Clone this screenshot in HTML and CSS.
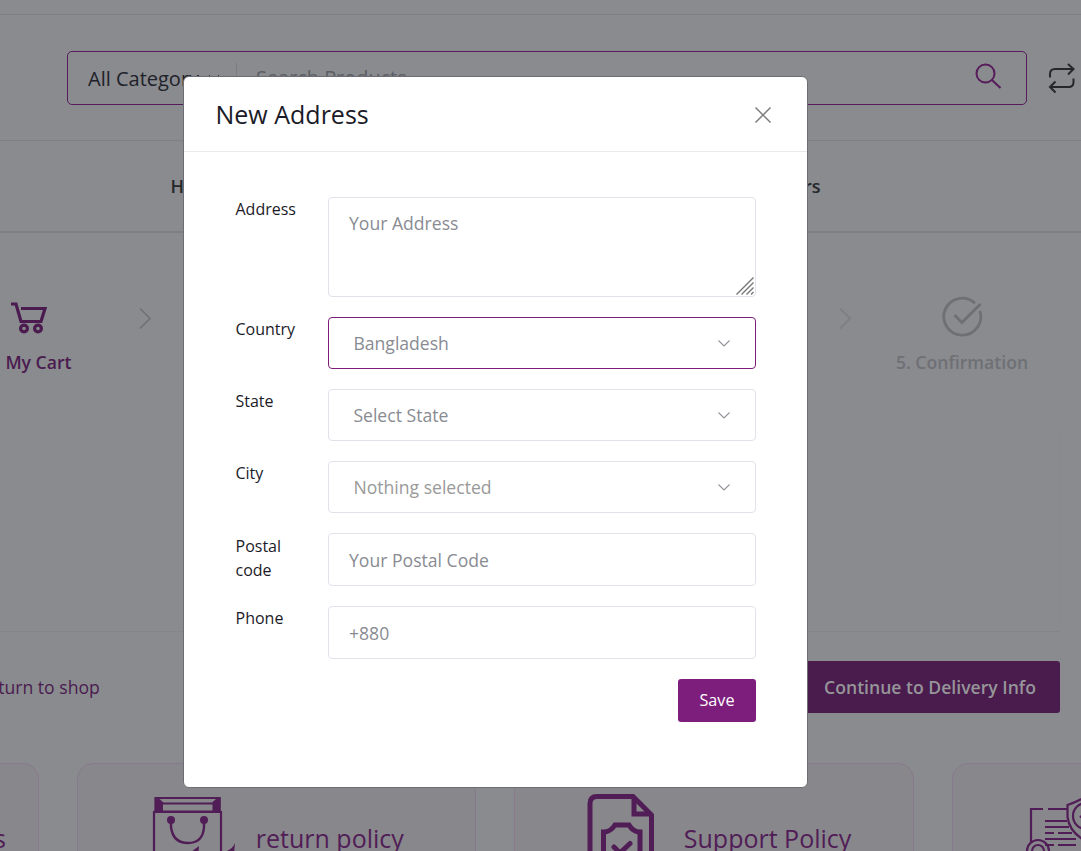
FILE: index.html
```html
<!DOCTYPE html>
<html lang="en">
<head>
<meta charset="utf-8">
<title>New Address</title>
<link rel="stylesheet" href="styles.css">
</head>
<body>
<div class="page">
  <div class="topbar"></div>
  <header class="header">
    <div class="search">
      <span class="search-category">All Category</span>
      <svg class="search-caret" width="12" height="8" viewBox="0 0 12 8"><path d="M1 1l5 5 5-5"/></svg>
      <span class="search-divider"></span>
      <span class="search-text">Search Products</span>
      <svg class="search-icon" width="28" height="28" viewBox="0 0 28 28"><circle cx="11.500" cy="10.500" r="9"/><path d="M17.900 16.900L26.500 25"/></svg>
    </div>
    <svg class="compare" width="28" height="32" viewBox="0 0 28 32"><path d="M2 15.500V12q0-5 5-5H25M20 2l5.500 5-5.500 5.500M25.500 16.500V20q0 5-5 5H2M7.500 19.500L2 25l5.500 5.500"/></svg>
  </header>
  <nav class="nav"><span>Home</span><span>All Sellers</span></nav>
  <section class="steps">
    <div class="step step-active">
      <svg width="38" height="34" viewBox="0 0 38 34"><path d="M1 3h5l5 17.500h20L35 7.500H11"/><circle cx="14" cy="27.500" r="3.400"/><circle cx="28" cy="27.500" r="3.400"/></svg>
      <span>1. My Cart</span>
    </div>
    <svg class="arrow" width="14" height="22" viewBox="0 0 14 22"><path d="M2 1.500l10 10L2 21.500"/></svg>
    <svg class="arrow arrow-faint" width="14" height="22" viewBox="0 0 14 22"><path d="M2 1.500l10 10L2 21.500"/></svg>
    <div class="step step-last">
      <svg width="42" height="42" viewBox="0 0 42 42"><path d="M34 8.200A18.500 18.500 0 1 0 38.900 16M13.500 20l7.500 7.500L39.500 9"/></svg>
      <span>5. Confirmation</span>
    </div>
  </section>
  <section class="panel"></section>
  <section class="actions">
    <span class="return">Return to shop</span>
    <button class="continue">Continue to Delivery Info</button>
  </section>
  <section class="policies">
    <div class="policy policy-terms"><span>Terms &amp; conditions</span></div>
    <div class="policy policy-return">
      <svg width="86" height="70" viewBox="0 0 86 70"><path d="M3 70V16h67v54M4.500 15V2h64v13M3 15.500h67" stroke-width="2.200"/><path d="M4 1l8 7v8H4zM69.500 1l-8 7v8h8z" class="fill"/><path d="M7 3l5 4.500h49.500l5-4.500" stroke-width="2"/><circle cx="20" cy="24" r="4" class="fill"/><circle cx="53" cy="24" r="4" class="fill"/><path d="M20 25v6q2 16 17 16t16-16v-6" stroke-width="2.400"/><path d="M40 56l8-6-1 12zM73 56q8-2 11-9l-2 22h-8z" class="fill"/></svg>
      <span>return policy</span>
    </div>
    <div class="policy policy-support">
      <svg width="70" height="70" viewBox="0 0 70 70"><path d="M3 70V9.500q0-7 7-7H46L64.500 21v49M47 3v17h16" stroke-width="5"/><path d="M16.500 70V38q7 0 11.500-7h14q4 7 11 7v32M27 53l6 6 10-9.500" stroke-width="5" stroke-linecap="round"/></svg>
      <span>Support Policy</span>
    </div>
    <div class="policy policy-privacy">
      <svg width="84" height="74" viewBox="0 0 84 74"><path d="M6 46V12h12M23 12h20M20 24h22M20 30h24M20 36h9M33 36h14M20 42h31M20 48h9M33 48h18" stroke-width="2.200"/><circle cx="13" cy="54" r="11" stroke-width="2.200"/><circle cx="13" cy="54" r="6" stroke-width="2.200"/><path d="M65-3Q54 4 42.500 8v12q2 16 20 25" stroke-width="2.200"/><circle cx="61" cy="19" r="13" stroke-width="2.200"/><path d="M55 19l5 5 9-9" stroke-width="2.200"/></svg>
      <span>Privacy Policy</span>
    </div>
  </section>

  <div class="modal">
    <div class="modal-head">
      <h1>New Address</h1>
      <svg class="close" width="18" height="18" viewBox="0 0 18 18"><path d="M1.500 1.500l15 15M16.500 1.500l-15 15"/></svg>
    </div>
    <div class="modal-body">
      <div class="row row-area">
        <span class="label">Address</span>
        <div class="field area">Your Address
          <svg class="grip" width="18" height="18" viewBox="0 0 18 18"><path d="M.5 17.500l17-17M5.500 17.500l12-12M10.500 17.500l7-7M15 17.500l2.500-2.500"/></svg>
        </div>
      </div>
      <div class="row"><span class="label">Country</span><div class="field select focus">Bangladesh<svg width="12" height="7" viewBox="0 0 12 7"><path d="M.5.5L6 6 11.500.5"/></svg></div></div>
      <div class="row"><span class="label">State</span><div class="field select">Select State<svg width="12" height="7" viewBox="0 0 12 7"><path d="M.5.5L6 6 11.500.5"/></svg></div></div>
      <div class="row"><span class="label">City</span><div class="field select city">Nothing selected<svg width="12" height="7" viewBox="0 0 12 7"><path d="M.5.5L6 6 11.500.5"/></svg></div></div>
      <div class="row row-tall"><span class="label label-postal">Postal code</span><div class="field">Your Postal Code</div></div>
      <div class="row row-tall"><span class="label">Phone</span><div class="field">+880</div></div>
      <button class="save">Save</button>
    </div>
  </div>
</div>
</body>
</html>
```
FILE: styles.css
```css
* { box-sizing: border-box; }
body { margin: 0; font-family: "Open Sans", sans-serif; }
svg { display: block; flex: none; fill: none; }
button { border: 0; font-family: inherit; }
.page { position: relative; width: 1081px; height: 851px; overflow: hidden; background: #898b8e; white-space: nowrap; }

.topbar { height: 15px; border-bottom: 1px solid #7e8085; }
.header { height: 126px; display: flex; align-items: flex-start; padding: 36px 0 0 67px; border-bottom: 1px solid #7e8085; }
.search { width: 960px; height: 54px; display: flex; align-items: center; padding: 0 24px 0 20px; border: 1px solid #561c5b; border-radius: 5px; font-size: 20px; color: #20212a; }
.search-category { width: 118px; }
.search-caret { margin: 0 14px 0 2px; stroke: #33343a; }
.search-divider { width: 1px; height: 30px; margin-left: 2px; background: #7b7d82; }
.search-text { margin: 0 0 2px 19px; color: #5b5e65; font-size: 19.9px; }
.search-icon { margin-left: auto; margin-bottom: 3px; stroke: #561c5b; stroke-width: 2; }
.compare { margin: 11px 0 0 21px; stroke: #26272b; stroke-width: 2; }
.nav { height: 92px; display: flex; justify-content: space-between; align-items: center; padding: 0 260.5px 0 170.5px; border-bottom: 2px solid #7e7f84; font-size: 18px; font-weight: 600; color: #26282b; }

.steps { height: 193px; display: flex; align-items: flex-start; padding-top: 62px; }
.step { display: flex; flex-direction: column; align-items: center; font-size: 17.6px; font-weight: 600; line-height: 24px; }
.step-active { width: 100px; margin-left: -21px; padding-top: 6px; color: #4b1b50; }
.step-active svg { align-self: flex-start; margin-left: 31px; stroke: #4b1b50; stroke-width: 3.2; }
.step-active span { align-self: flex-end; margin-top: 15px; padding-right: 7.5px; }
.arrow { margin: 12px 0 0 59px; stroke: #707176; stroke-width: 1.6; }
.arrow-faint { margin-left: 686px; stroke: #7c7d82; }
.step-last { width: 142px; margin-left: 39px; color: #6f7076; }
.step-last svg { stroke: #6f7076; stroke-width: 2.8; }
.step-last span { margin-top: 13px; }
.panel { height: 206px; width: 1060px; border-right: 1px solid #87898c; border-bottom: 1px solid #838589; }
.actions { height: 131px; display: flex; justify-content: space-between; align-items: flex-start; padding: 29px 21px 0 0; }
.return { margin-left: -22.5px; font-size: 17.6px; line-height: 52px; color: #4b1b50; }
.continue { width: 260px; height: 52px; padding: 0; background: #4a1b4d; color: #96959a; border-radius: 3px; font-size: 17.6px; font-weight: 600; }
.policies { display: grid; grid-template-columns: repeat(4, 399.5px); gap: 38px; margin-left: -360.7px; }
.policy { height: 160px; display: flex; align-items: flex-start; border: 1px solid #89798e; border-radius: 16px; background: #88878c; color: #511d56; font-size: 25px; line-height: 36px; }
.policy span { margin-top: 56px; }
.policy svg { stroke: #511d56; }
.policy .fill { fill: #511d56; stroke: none; }
.policy-terms { justify-content: flex-end; padding-right: 32px; }
.policy-return svg { margin: 32px 0 0 73px; }
.policy-return span { margin-left: 19px; }
.policy-support svg { margin: 30px 0 0 72px; }
.policy-support span { margin-left: 26.5px; }
.policy-privacy svg { margin: 33px 0 0 72px; }

.modal { position: absolute; left: 183px; top: 76px; width: 625px; height: 712px; background: #fff; border: 1px solid #6d6e73; border-radius: 6px; }
.modal-head { height: 75px; display: flex; justify-content: space-between; align-items: center; padding: 1px 35px 0 31.5px; border-bottom: 1px solid #e9eaed; }
.modal-head h1 { margin: 0 0 2px; font-size: 25px; font-weight: 400; line-height: 34px; color: #1b1b28; }
.close { stroke: #7d7d7d; stroke-width: 1.5; }
.modal-body { display: flex; flex-direction: column; gap: 20px; padding: 45px 51px 0; }
.row { display: flex; height: 52px; }
.row-area { height: 100px; }
.row-tall { height: 53px; }
.label { width: 93px; padding: 0 28px 0 .5px; font-size: 16px; line-height: 24px; color: #1b1b28; white-space: normal; }
.label-postal { padding-top: 1px; }
.field { position: relative; flex: 1; display: flex; align-items: center; padding: 0 25px 0 20px; border: 1px solid #e2e2ea; border-radius: 4px; font-size: 17.6px; color: #898b92; }
.area { align-items: flex-start; padding-top: 13px; line-height: 25px; }
.grip { position: absolute; right: 1px; bottom: 1px; stroke: #777; stroke-width: 1.4; }
.select { justify-content: space-between; padding-left: 24.4px; }
.select svg { stroke: #92949b; stroke-width: 1.1; }
.focus { border-color: #7e1e7c; }
.city { color: #999; }
.save { align-self: flex-end; width: 78px; height: 43px; padding: 0 0 2px; border-radius: 3px; background: #7e1e7c; color: #fff; font-size: 16.200px; }
```
